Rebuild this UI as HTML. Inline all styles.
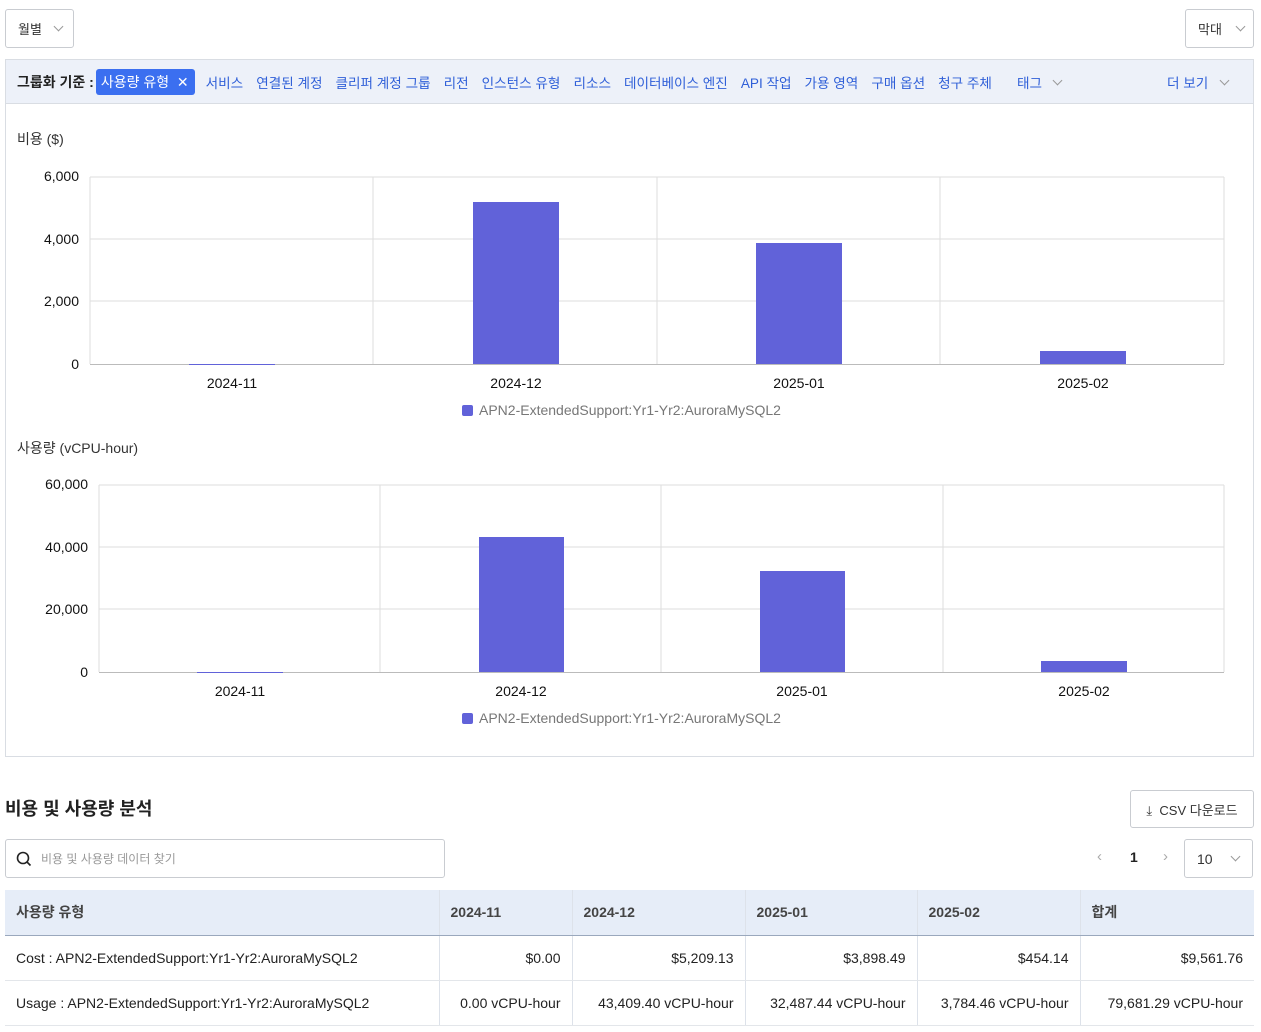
<!DOCTYPE html>
<html><head><meta charset="utf-8"><style>
*{box-sizing:border-box;margin:0;padding:0}
body{width:1261px;height:1032px;background:#fff;font-family:"Liberation Sans","Noto Sans CJK KR",sans-serif;color:#222;position:relative;overflow:hidden}
.a{position:absolute}
.sel{position:absolute;border:1px solid #c9ccd1;border-radius:3px;background:#fff;font-size:13px;color:#333;display:flex;align-items:center}
.chev{display:inline-block;width:7px;height:7px;border-right:1.3px solid #999;border-bottom:1.3px solid #999;transform:rotate(45deg);margin-top:-4px}
.nav span{color:#2f5fd8;font-size:13.6px;margin-right:13px}
.nav .chev{vertical-align:middle;margin-top:-6px}
table{border-collapse:collapse;font-size:14px}
td,th{height:45px;padding:0 11px;border-right:1px solid #dde2ea}
th{background:#e6edf8;text-align:left;font-weight:bold;color:#444;border-bottom:1.5px solid #9aa8bd}
td{border-bottom:1px solid #e3e6ea;text-align:right}
td:first-child{text-align:left}
td:last-child,th:last-child{border-right:none}
</style></head><body>
<div class="sel" style="left:5px;top:9px;width:69px;height:39px;padding-left:12px">월별<span class="chev" style="margin-left:13px"></span></div>
<div class="sel" style="left:1185px;top:9px;width:69px;height:39px;padding-left:12px">막대<span class="chev" style="margin-left:15px"></span></div>

<div class="a" style="left:5px;top:59px;width:1249px;height:698px;border:1px solid #d9dde3"></div>
<div class="a nav" style="left:6px;top:60px;width:1247px;height:44px;background:#edf1f9;border-bottom:1px solid #d9dde3;display:flex;align-items:center;padding-left:11px;white-space:nowrap">
<b style="font-size:14px;color:#222;margin-right:2px">그룹화 기준 :</b>
<span style="background:#3b6ff0;color:#fff;border-radius:3px;padding:3px 6px 3px 5px;margin-right:11px;font-size:14px">사용량 유형 &nbsp;✕</span>
<span>서비스</span><span>연결된 계정</span><span>클리퍼 계정 그룹</span><span>리전</span><span>인스턴스 유형</span><span>리소스</span><span>데이터베이스 엔진</span><span>API 작업</span><span>가용 영역</span><span>구매 옵션</span><span>청구 주체</span><span style="margin-left:12px">태그 <i class="chev" style="margin-left:8px"></i></span>
<span style="position:absolute;left:1161px">더 보기 <i class="chev" style="margin-left:9px"></i></span>
</div>

<div class="a" style="left:17px;top:129px;font-size:14px;color:#333">비용 ($)</div>
<svg class="a" style="left:0;top:0" width="1261" height="760" font-family="Liberation Sans" font-size="14">
<g stroke="#ddd" fill="none">
<path d="M90 177H1224M90 239H1224M90 301H1224M90 177V364M373 177V364M657 177V364M940 177V364M1224 177V364"/>
<path d="M99 485H1224M99 547H1224M99 609H1224M99 485V672M380 485V672M661 485V672M943 485V672M1224 485V672"/>
</g>
<path d="M90 364.5H1224M99 672.5H1224" stroke="#bbb"/>
<g fill="#6162d9">
<rect x="473" y="202" width="86" height="162"/><rect x="756" y="243" width="86" height="121"/><rect x="1040" y="351" width="86" height="13"/><rect x="189" y="364" width="86" height="1"/>
<rect x="479" y="537" width="85" height="135"/><rect x="760" y="571" width="85" height="101"/><rect x="1041" y="661" width="86" height="11"/><rect x="197" y="672" width="86" height="1"/>
</g>
<g fill="#111" text-anchor="end">
<text x="79" y="181">6,000</text><text x="79" y="244">4,000</text><text x="79" y="306">2,000</text><text x="79" y="369">0</text>
<text x="88" y="489">60,000</text><text x="88" y="552">40,000</text><text x="88" y="614">20,000</text><text x="88" y="677">0</text>
</g>
<g fill="#111" text-anchor="middle">
<text x="232" y="388">2024-11</text><text x="516" y="388">2024-12</text><text x="799" y="388">2025-01</text><text x="1083" y="388">2025-02</text>
<text x="240" y="696">2024-11</text><text x="521" y="696">2024-12</text><text x="802" y="696">2025-01</text><text x="1084" y="696">2025-02</text>
</g>
<rect x="462" y="405" width="11" height="11" rx="2" fill="#6162d9"/><text x="479" y="415" fill="#777">APN2-ExtendedSupport:Yr1-Yr2:AuroraMySQL2</text>
<rect x="462" y="713" width="11" height="11" rx="2" fill="#6162d9"/><text x="479" y="723" fill="#777">APN2-ExtendedSupport:Yr1-Yr2:AuroraMySQL2</text>
</svg>
<div class="a" style="left:17px;top:438px;font-size:14px;color:#333">사용량 (vCPU-hour)</div>

<div class="a" style="left:5px;top:795px;font-size:18px;font-weight:bold;color:#222">비용 및 사용량 분석</div>
<div class="sel" style="left:1130px;top:790px;width:124px;height:38px;justify-content:center;font-size:13px">⤓&nbsp; CSV 다운로드</div>
<div class="sel" style="left:5px;top:839px;width:440px;height:39px;padding-left:10px;color:#999;font-size:12px"><svg width="16" height="16" style="margin-right:9px"><circle cx="7" cy="7" r="5.5" stroke="#222" stroke-width="1.6" fill="none"/><path d="M11 11l3.5 3.5" stroke="#222" stroke-width="1.6"/></svg>비용 및 사용량 데이터 찾기</div>
<div class="a" style="left:1097px;top:848px;font-size:15px;color:#aaa">‹</div>
<div class="a" style="left:1130px;top:849px;font-size:14px;font-weight:bold">1</div>
<div class="a" style="left:1163px;top:848px;font-size:15px;color:#aaa">›</div>
<div class="sel" style="left:1184px;top:839px;width:69px;height:39px;padding-left:12px;font-size:14px">10<span class="chev" style="margin-left:19px"></span></div>

<table class="a" style="left:5px;top:890px;width:1249px">
<tr><th style="width:434px">사용량 유형</th><th style="width:133px">2024-11</th><th style="width:173px">2024-12</th><th style="width:172px">2025-01</th><th style="width:163px">2025-02</th><th>합계</th></tr>
<tr><td>Cost : APN2-ExtendedSupport:Yr1-Yr2:AuroraMySQL2</td><td>$0.00</td><td>$5,209.13</td><td>$3,898.49</td><td>$454.14</td><td>$9,561.76</td></tr>
<tr><td>Usage : APN2-ExtendedSupport:Yr1-Yr2:AuroraMySQL2</td><td>0.00 vCPU-hour</td><td>43,409.40 vCPU-hour</td><td>32,487.44 vCPU-hour</td><td>3,784.46 vCPU-hour</td><td>79,681.29 vCPU-hour</td></tr>
</table>
</body></html>
